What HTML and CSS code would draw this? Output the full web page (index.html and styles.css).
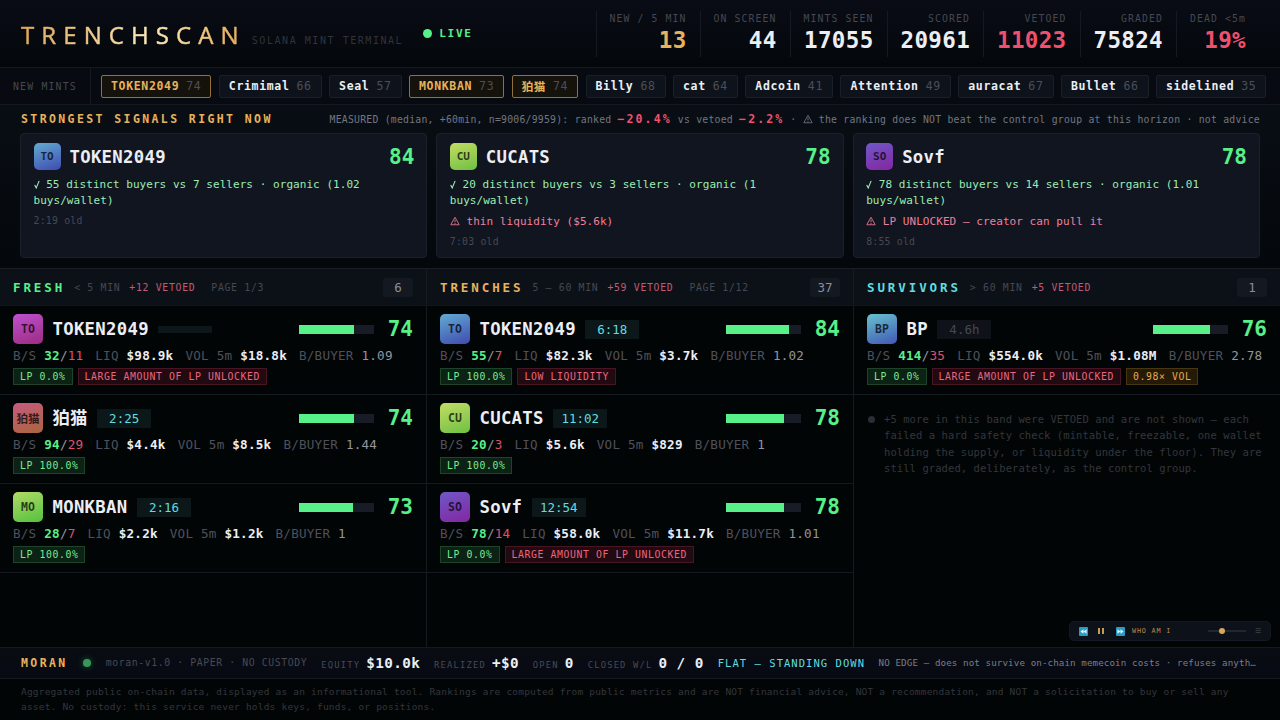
FILE: index.html
```html
<!DOCTYPE html>
<html lang="en">
<head>
    <meta charset="UTF-8">
    <meta name="viewport" content="width=device-width, initial-scale=1.0">
    <title>TRENCHSCAN - Solana mint terminal</title>
    <link rel="stylesheet" href="styles.css">
</head>
<body>
    <header class="top">
        <div class="brand">
            <h1 class="logo">TRENCHSCAN</h1>
            <span class="tagline">SOLANA MINT TERMINAL</span>
        </div>
        <div class="live"><i></i>LIVE</div>
        <div class="stats">
            <div class="stat"><label>NEW / 5 MIN</label><b class="gold">13</b></div>
            <div class="stat"><label>ON SCREEN</label><b>44</b></div>
            <div class="stat"><label>MINTS SEEN</label><b>17055</b></div>
            <div class="stat"><label>SCORED</label><b>20961</b></div>
            <div class="stat"><label>VETOED</label><b class="red">11023</b></div>
            <div class="stat"><label>GRADED</label><b>75824</b></div>
            <div class="stat"><label>DEAD &lt;5m</label><b class="red">19%</b></div>
        </div>
    </header>

    <div class="ticker">
        <div class="ticker-label">NEW MINTS</div>
        <div class="chips">
            <span class="chip hot"><b>TOKEN2049</b><i>74</i></span>
            <span class="chip"><b>Crimimal</b><i>66</i></span>
            <span class="chip"><b>Seal</b><i>57</i></span>
            <span class="chip hot"><b>MONKBAN</b><i>73</i></span>
            <span class="chip hot"><b>狛猫</b><i>74</i></span>
            <span class="chip"><b>Billy</b><i>68</i></span>
            <span class="chip"><b>cat</b><i>64</i></span>
            <span class="chip"><b>Adcoin</b><i>41</i></span>
            <span class="chip"><b>Attention</b><i>49</i></span>
            <span class="chip"><b>auracat</b><i>67</i></span>
            <span class="chip"><b>Bullet</b><i>66</i></span>
            <span class="chip"><b>sidelined</b><i>35</i></span>
        </div>
    </div>

    <section class="signals">
        <div class="signals-head">
            <h2>STRONGEST SIGNALS RIGHT NOW</h2>
            <p>MEASURED (median, +60min, n=9006/9959): ranked <b>−20.4%</b> vs vetoed <b>−2.2%</b> · <svg class="warn" viewBox="0 0 12 12"><path d="M6 1.5 11 10.5H1ZM6 4.5v3M6 8.4v1.1"/></svg> the ranking does NOT beat the control group at this horizon · not advice</p>
        </div>
        <div class="cards">
            <article class="card">
                <div class="card-head"><span class="ico blue">TO</span><h3>TOKEN2049</h3><b class="score">84</b></div>
                <p class="good"><svg class="tick" viewBox="0 0 7 10"><path d="M.8 5.5 2.6 9 6 .8"/></svg> 55 distinct buyers vs 7 sellers · organic (1.02 buys/wallet)</p>
                <p class="old">2:19 old</p>
            </article>
            <article class="card">
                <div class="card-head"><span class="ico lime">CU</span><h3>CUCATS</h3><b class="score">78</b></div>
                <p class="good"><svg class="tick" viewBox="0 0 7 10"><path d="M.8 5.5 2.6 9 6 .8"/></svg> 20 distinct buyers vs 3 sellers · organic (1<br>buys/wallet)</p>
                <p class="bad"><svg class="warn" viewBox="0 0 12 12"><path d="M6 1.5 11 10.5H1ZM6 4.5v3M6 8.4v1.1"/></svg> thin liquidity ($5.6k)</p>
                <p class="old">7:03 old</p>
            </article>
            <article class="card">
                <div class="card-head"><span class="ico purple">SO</span><h3>Sovf</h3><b class="score">78</b></div>
                <p class="good"><svg class="tick" viewBox="0 0 7 10"><path d="M.8 5.5 2.6 9 6 .8"/></svg> 78 distinct buyers vs 14 sellers · organic (1.01 buys/wallet)</p>
                <p class="bad"><svg class="warn" viewBox="0 0 12 12"><path d="M6 1.5 11 10.5H1ZM6 4.5v3M6 8.4v1.1"/></svg> LP UNLOCKED — creator can pull it</p>
                <p class="old">8:55 old</p>
            </article>
        </div>
    </section>

    <main class="board">
        <section class="col">
            <div class="col-head">
                <h2 class="green">FRESH</h2><span>&lt; 5 MIN</span><span class="vetoed">+12 VETOED</span><span class="page">PAGE 1/3</span><em>6</em>
            </div>
            <div class="row">
                <div class="row-head"><span class="ico pink">TO</span><h3>TOKEN2049</h3><span class="age empty"></span><div class="bar"><i style="width: 74%"></i></div><b class="score">74</b></div>
                <div class="meta"><span>B/S <b class="buy">32</b><u>/</u><b class="sell">11</b></span><span>LIQ <b>$98.9k</b></span><span>VOL 5m <b>$18.8k</b></span><span>B/BUYER <u>1.09</u></span></div>
                <div class="tags"><span class="tag ok">LP 0.0%</span><span class="tag danger">LARGE AMOUNT OF LP UNLOCKED</span></div>
            </div>
            <div class="row">
                <div class="row-head"><span class="ico rust">狛猫</span><h3>狛猫</h3><span class="age">2:25</span><div class="bar"><i style="width: 74%"></i></div><b class="score">74</b></div>
                <div class="meta"><span>B/S <b class="buy">94</b><u>/</u><b class="sell">29</b></span><span>LIQ <b>$4.4k</b></span><span>VOL 5m <b>$8.5k</b></span><span>B/BUYER <u>1.44</u></span></div>
                <div class="tags"><span class="tag ok">LP 100.0%</span></div>
            </div>
            <div class="row">
                <div class="row-head"><span class="ico leaf">MO</span><h3>MONKBAN</h3><span class="age">2:16</span><div class="bar"><i style="width: 73%"></i></div><b class="score">73</b></div>
                <div class="meta"><span>B/S <b class="buy">28</b><u>/</u><b class="sell">7</b></span><span>LIQ <b>$2.2k</b></span><span>VOL 5m <b>$1.2k</b></span><span>B/BUYER <u>1</u></span></div>
                <div class="tags"><span class="tag ok">LP 100.0%</span></div>
            </div>
        </section>

        <section class="col">
            <div class="col-head">
                <h2 class="gold">TRENCHES</h2><span>5 — 60 MIN</span><span class="vetoed">+59 VETOED</span><span class="page">PAGE 1/12</span><em>37</em>
            </div>
            <div class="row">
                <div class="row-head"><span class="ico blue">TO</span><h3>TOKEN2049</h3><span class="age">6:18</span><div class="bar"><i style="width: 84%"></i></div><b class="score">84</b></div>
                <div class="meta"><span>B/S <b class="buy">55</b><u>/</u><b class="sell">7</b></span><span>LIQ <b>$82.3k</b></span><span>VOL 5m <b>$3.7k</b></span><span>B/BUYER <u>1.02</u></span></div>
                <div class="tags"><span class="tag ok">LP 100.0%</span><span class="tag danger">LOW LIQUIDITY</span></div>
            </div>
            <div class="row">
                <div class="row-head"><span class="ico lime">CU</span><h3>CUCATS</h3><span class="age">11:02</span><div class="bar"><i style="width: 78%"></i></div><b class="score">78</b></div>
                <div class="meta"><span>B/S <b class="buy">20</b><u>/</u><b class="sell">3</b></span><span>LIQ <b>$5.6k</b></span><span>VOL 5m <b>$829</b></span><span>B/BUYER <u>1</u></span></div>
                <div class="tags"><span class="tag ok">LP 100.0%</span></div>
            </div>
            <div class="row">
                <div class="row-head"><span class="ico purple">SO</span><h3>Sovf</h3><span class="age">12:54</span><div class="bar"><i style="width: 78%"></i></div><b class="score">78</b></div>
                <div class="meta"><span>B/S <b class="buy">78</b><u>/</u><b class="sell">14</b></span><span>LIQ <b>$58.0k</b></span><span>VOL 5m <b>$11.7k</b></span><span>B/BUYER <u>1.01</u></span></div>
                <div class="tags"><span class="tag ok">LP 0.0%</span><span class="tag danger">LARGE AMOUNT OF LP UNLOCKED</span></div>
            </div>
        </section>

        <section class="col">
            <div class="col-head">
                <h2 class="cyan">SURVIVORS</h2><span>&gt; 60 MIN</span><span class="vetoed">+5 VETOED</span><em>1</em>
            </div>
            <div class="row">
                <div class="row-head"><span class="ico sky">BP</span><h3>BP</h3><span class="age stale">4.6h</span><div class="bar"><i style="width: 76%"></i></div><b class="score">76</b></div>
                <div class="meta"><span>B/S <b class="buy">414</b><u>/</u><b class="sell">35</b></span><span>LIQ <b>$554.0k</b></span><span>VOL 5m <b>$1.08M</b></span><span>B/BUYER <u>2.78</u></span></div>
                <div class="tags"><span class="tag ok">LP 0.0%</span><span class="tag danger">LARGE AMOUNT OF LP UNLOCKED</span><span class="tag amber">0.98× VOL</span></div>
            </div>
            <div class="note">
                <i></i>
                <p>+5 more in this band were VETOED and are not shown — each failed a hard safety check (mintable, freezable, one wallet holding the supply, or liquidity under the floor). They are still graded, deliberately, as the control group.</p>
            </div>
        </section>

        <!-- music player floats over the board -->
        <div class="player">
            <svg class="skip" viewBox="0 0 9 9"><rect width="9" height="9" rx="1"/><path d="M4.5 2.2v4.6L1.4 4.5ZM7.6 2.2v4.6L4.5 4.5Z"/></svg>
            <span class="pause"></span>
            <svg class="skip" viewBox="0 0 9 9"><rect width="9" height="9" rx="1"/><path d="M1.4 2.2v4.6L4.5 4.5ZM4.5 2.2v4.6L7.6 4.5Z"/></svg>
            <span class="track">WHO AM I</span>
            <span class="volume"><i></i></span>
            <span class="menu">☰</span>
        </div>
    </main>

    <div class="moran">
        <b class="moran-name">MORAN</b>
        <i class="moran-dot"></i>
        <span class="moran-ver">moran-v1.0 · PAPER · NO CUSTODY</span>
        <div class="kv"><label>EQUITY</label><b>$10.0k</b></div>
        <div class="kv"><label>REALIZED</label><b>+$0</b></div>
        <div class="kv"><label>OPEN</label><b>0</b></div>
        <div class="kv"><label>CLOSED W/L</label><b>0 / 0</b></div>
        <span class="state">FLAT — STANDING DOWN</span>
        <span class="why">NO EDGE — does not survive on-chain memecoin costs · refuses anyth…</span>
    </div>

    <footer class="legal">Aggregated public on-chain data, displayed as an informational tool. Rankings are computed from public metrics and are NOT financial advice, NOT a recommendation, and NOT a solicitation to buy or sell any asset. No custody: this service never holds keys, funds, or positions.</footer>
</body>
</html>
```
FILE: styles.css
```css
:root {
    --bg: #020506;
    --line: #161a20;
    --text: #eceef4;
    --dim: #454852;
    --faint: #33363d;
    --gold: #e8b25c;
    --green: #58f088;
    --red: #f0506e;
    --cyan: #5fdde0;
}

* {
    box-sizing: border-box;
}

body {
    margin: 0;
    width: 1280px;
    height: 720px;
    overflow: hidden;
    display: flex;
    flex-direction: column;
    background: var(--bg);
    color: var(--text);
    font-family: "DejaVu Sans Mono", "Noto Sans CJK SC", monospace;
    font-size: 13px;
}

h1, h2, h3, p {
    margin: 0;
}

i, em {
    font-style: normal;
}

u {
    text-decoration: none;
}

.gold { color: var(--gold) !important; }
.red { color: var(--red) !important; }
.green { color: var(--green); }
.cyan { color: var(--cyan); }

/* top bar */
.top {
    height: 68px;
    flex: none;
    display: flex;
    align-items: center;
    padding: 0 21px 0 20px;
    background: linear-gradient(#090c15, #04070a);
    border-bottom: 1px solid var(--line);
}

.brand {
    display: flex;
    align-items: baseline;
    gap: 6px;
    padding: 2px 0 0 1px;
}

.logo {
    font-family: "Open Sans", "Noto Sans", sans-serif;
    font-size: 24px;
    font-weight: 500;
    line-height: 34px;
    letter-spacing: 7.1px;
    background: linear-gradient(90deg, #e0a854, #fbe6b8 55%, #fbe0a8 65%, #e3a956);
    -webkit-background-clip: text;
    background-clip: text;
    color: transparent;
    -webkit-text-stroke: 0.5px transparent;
}

.tagline {
    font-size: 10px;
    letter-spacing: 0.155em;
    color: #30333b;
}

.live {
    display: flex;
    align-items: center;
    gap: 7px;
    margin-left: 20px;
    font-size: 11px;
    font-weight: bold;
    letter-spacing: 0.16em;
    color: var(--green);
}

.live i {
    width: 9px;
    height: 9px;
    border-radius: 50%;
    background: var(--green);
}

.stats {
    display: flex;
    margin-left: auto;
}

.stat {
    display: flex;
    flex-direction: column;
    align-items: flex-end;
    height: 46px;
    padding: 1px 13px 0;
    border-left: 1px solid var(--line);
}

.stat label {
    font-size: 9.8px;
    line-height: 13px;
    letter-spacing: 1.1px;
    color: var(--dim);
}

.stat b {
    font-size: 22.5px;
    line-height: 31px;
    letter-spacing: 0.35px;
}

/* new mints ticker */
.ticker {
    height: 37px;
    flex: none;
    display: flex;
    background: #070a10;
    border-bottom: 1px solid var(--line);
}

.ticker-label {
    display: flex;
    align-items: center;
    flex: none;
    width: 91px;
    padding-left: 13px;
    border-right: 1px solid var(--line);
    font-size: 9.8px;
    letter-spacing: 1.2px;
    color: var(--dim);
}

.chips {
    display: flex;
    align-items: center;
    gap: 7.4px;
    padding-left: 10px;
}

.chip {
    display: flex;
    align-items: center;
    flex: none;
    gap: 7px;
    height: 23px;
    padding: 0 9px;
    border: 1px solid #1a1e27;
    border-radius: 2px;
    background: #0e131b;
    font-size: 11.5px;
    letter-spacing: 0.66px;
}

.chip i {
    color: #4b4e58;
}

.chip.hot {
    border-color: #94713a;
    background: #15120c;
}

.chip.hot b {
    color: var(--gold);
}

/* strongest signals */
.signals {
    height: 163px;
    flex: none;
    padding: 0 20px;
    background: linear-gradient(#090e15, #04070b);
}

.signals-head {
    display: flex;
    align-items: center;
    justify-content: space-between;
    height: 28px;
    padding-left: 1px;
}

.signals-head h2 {
    font-size: 11.5px;
    letter-spacing: 2.4px;
    color: var(--gold);
}

.signals-head p {
    font-size: 9.8px;
    letter-spacing: 0.23px;
    color: #737680;
    white-space: nowrap;
}

.signals-head p b {
    font-size: 11.5px;
    letter-spacing: 2.1px;
    color: var(--red);
}

.warn {
    width: 10px;
    height: 10px;
    vertical-align: -1px;
    fill: none;
    stroke: currentColor;
    stroke-width: 1;
}

.tick {
    width: 6px;
    height: 9px;
    vertical-align: -1px;
    fill: none;
    stroke: currentColor;
    stroke-width: 1.3;
}

.cards {
    display: grid;
    grid-template-columns: repeat(3, 1fr);
    gap: 9px;
    height: 125px;
}

.card {
    padding: 9px 12px 0 12.5px;
    border: 1px solid #1c2029;
    border-radius: 4px;
    background: #11151f;
}

.card-head {
    display: flex;
    align-items: center;
    gap: 9px;
    height: 27px;
    margin-bottom: 6.6px;
}

.card p {
    font-size: 11px;
    line-height: 16.7px;
    letter-spacing: 0.05px;
}

.card .good { color: #9cecb4; }
.card .bad { color: #f07f9c; margin-top: 4px; }

.card .old {
    margin-top: 3px;
    font-size: 9.8px;
    letter-spacing: 0.23px;
    color: #464953;
}

h3 {
    font-size: 17.3px;
    line-height: 24px;
    letter-spacing: 0.3px;
}

.score {
    margin-left: auto;
    font-size: 21px;
    color: var(--green);
}

.ico {
    display: flex;
    align-items: center;
    justify-content: center;
    width: 30px;
    height: 30px;
    flex: none;
    border-radius: 5px;
    font-size: 11.5px;
    color: rgba(0, 0, 0, 0.72);
    font-weight: bold;
}

.card .ico {
    width: 27px;
    height: 27px;
    font-size: 11px;
}

.blue { background: linear-gradient(160deg, #62abd2, #3f4bb0); }
.sky { background: linear-gradient(160deg, #66c2cf, #4258b4); }
.lime { background: linear-gradient(160deg, #c3dc64, #6fc043); }
.leaf { background: linear-gradient(160deg, #b0dc66, #55c03f); }
.purple { background: linear-gradient(160deg, #6f58c8, #8426a0); }
.pink { background: linear-gradient(160deg, #c050d0, #9c2c80); }
.rust { background: linear-gradient(160deg, #c85a80, #a8663c); }

/* three age bands */
.board {
    position: relative;
    flex: 1;
    display: grid;
    grid-template-columns: 427px 427px 1fr;
    border-top: 1px solid #1a1e25;
}

.col {
    border-right: 1px solid var(--line);
}

.col:nth-child(3) {
    border-right: 0;
}

.col-head {
    display: flex;
    align-items: center;
    gap: 9px;
    height: 37px;
    padding: 0 13px;
    background: #0c1118;
    border-bottom: 1px solid #12161c;
    font-size: 9.8px;
    letter-spacing: 0.7px;
    color: var(--dim);
}

.col-head h2 {
    font-size: 12.5px;
    letter-spacing: 2.9px;
}

.col-head .vetoed {
    color: #c25a74;
}

.col-head .page {
    margin-left: 7px;
}

.col-head em {
    margin-left: auto;
    min-width: 30px;
    border-radius: 3px;
    background: #131821;
    font-size: 12.5px;
    line-height: 19px;
    letter-spacing: 0;
    text-align: center;
    color: #8b8e99;
}

.row {
    height: 89px;
    padding: 8px 13px 0;
    border-bottom: 1px solid var(--line);
}

.row-head {
    display: flex;
    align-items: center;
    gap: 9.5px;
    height: 30px;
}

.row-head .score {
    margin-left: 0;
    width: 30px;
    text-align: right;
}

.age {
    min-width: 54px;
    height: 19px;
    background: #0c1719;
    font-size: 12.5px;
    line-height: 19px;
    text-align: center;
    color: var(--cyan);
}

.age.empty {
    height: 7px;
}

.age.stale {
    background: #0f1218;
    color: #444751;
}

.bar {
    width: 75px;
    height: 9px;
    margin-left: auto;
    background: #181c27;
}

.bar i {
    display: block;
    height: 100%;
    background: var(--green);
}

.meta {
    display: flex;
    gap: 12px;
    margin-top: 3px;
    font-size: 12.6px;
    line-height: 18px;
    letter-spacing: 0.23px;
    color: #4e515b;
    white-space: nowrap;
}

.meta b { color: var(--text); }
.meta u { color: #92959e; }
.meta .buy { color: var(--green); }
.meta .sell { color: #e0506c; font-weight: normal; }

.tags {
    display: flex;
    gap: 5px;
    margin-top: 3px;
}

.tag {
    height: 17px;
    padding: 0 6px;
    border: 1px solid;
    font-size: 9.8px;
    line-height: 15px;
    letter-spacing: 0.6px;
}

.tag.ok {
    border-color: #1d4429;
    background: #0c2214;
    color: #78ea96;
}

.tag.danger {
    border-color: #471622;
    background: #220a12;
    color: #ec657e;
}

.tag.amber {
    border-color: #49350f;
    background: #251a07;
    color: #e4aa50;
}

.note {
    display: flex;
    gap: 9px;
    padding: 16px 8px 0 14px;
    font-size: 10.5px;
    line-height: 16.4px;
    letter-spacing: 0.08px;
    color: var(--faint);
}

.note i {
    flex: none;
    width: 7px;
    height: 7px;
    margin-top: 5px;
    border-radius: 50%;
    background: #2b2e35;
}

.player {
    position: absolute;
    right: 9px;
    bottom: 6px;
    display: flex;
    align-items: center;
    width: 202px;
    height: 20px;
    padding: 0 9px;
    border: 1px solid #141821;
    border-radius: 5px;
    background: #0d1119;
}

.skip {
    width: 9px;
    height: 9px;
}

.skip rect { fill: #2a9cc4; }
.skip path { fill: #e6f4fa; }

.pause {
    width: 6px;
    height: 6px;
    margin: 0 12px 0 10px;
    border: solid #c99a54;
    border-width: 0 2px;
}

.track {
    margin-left: 7px;
    font-size: 6.8px;
    letter-spacing: 0.8px;
    color: #b58a4c;
}

.volume {
    width: 38px;
    height: 2px;
    margin-left: auto;
    background: #22262e;
}

.volume i {
    display: block;
    width: 6px;
    height: 6px;
    margin: -2px 0 0 11px;
    border-radius: 50%;
    background: #d9a75c;
}

.menu {
    margin-left: 9px;
    font-size: 7px;
    color: #3d4048;
}

/* paper trading bar */
.moran {
    height: 32px;
    flex: none;
    display: flex;
    align-items: center;
    padding: 0 0 1px 21px;
    background: linear-gradient(#090c12, #070a14);
    border-top: 1px solid var(--line);
    border-bottom: 1px solid var(--line);
    white-space: nowrap;
}

.moran-name {
    font-size: 11.5px;
    letter-spacing: 2.4px;
    color: var(--gold);
}

.moran-dot {
    width: 8px;
    height: 8px;
    margin: 0 15px;
    border-radius: 50%;
    background: #37985a;
    box-shadow: 0 0 6px #1d5a36;
}

.moran-ver {
    font-size: 9.8px;
    letter-spacing: 0.61px;
    color: #474a54;
}

.kv {
    display: flex;
    align-items: baseline;
    gap: 6px;
    margin-left: 13.8px;
}

.kv label {
    font-size: 8.8px;
    letter-spacing: 1.2px;
    color: #474a54;
}

.kv b {
    font-size: 14.3px;
    letter-spacing: 0.4px;
}

.state {
    margin-left: 14px;
    font-size: 10.5px;
    letter-spacing: 1.05px;
    color: var(--cyan);
}

.why {
    margin-left: 13.5px;
    font-size: 9.2px;
    letter-spacing: 0.1px;
    color: #7b7e88;
}

.legal {
    height: 41px;
    flex: none;
    padding: 5px 20px 0 21px;
    font-size: 9.5px;
    line-height: 15px;
    letter-spacing: 0.2px;
    color: var(--faint);
}
```
